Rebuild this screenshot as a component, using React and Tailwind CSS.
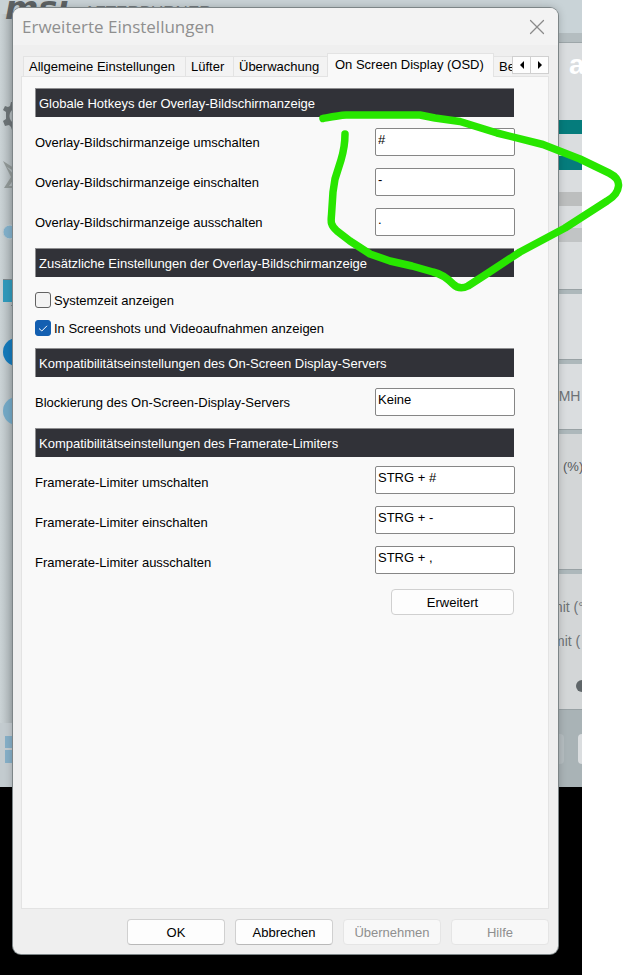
import { X } from 'lucide-react'

const overlayHotkeys = [
  { id: 'osd-toggle', label: 'Overlay-Bildschirmanzeige umschalten', value: '#' },
  { id: 'osd-on', label: 'Overlay-Bildschirmanzeige einschalten', value: '-' },
  { id: 'osd-off', label: 'Overlay-Bildschirmanzeige ausschalten', value: '.' },
]

const limiterHotkeys = [
  { id: 'limit-toggle', label: 'Framerate-Limiter umschalten', value: 'STRG + #' },
  { id: 'limit-on', label: 'Framerate-Limiter einschalten', value: 'STRG + -' },
  { id: 'limit-off', label: 'Framerate-Limiter ausschalten', value: 'STRG + ,' },
]

function SectionTitle({ children }) {
  return (
    <h2 className="h-[29px] border-t border-l border-[#8e8e90] bg-[#313238] pl-[3px] leading-[30px] text-white">
      {children}
    </h2>
  )
}

function Field({ id, label, value, low }) {
  return (
    <div className="flex h-10 items-center justify-between">
      <label htmlFor={id} className={low ? 'pt-1.5' : 'pt-0.5'}>
        {label}
      </label>
      <input
        id={id}
        defaultValue={value}
        className="-mr-px h-7 w-[140px] rounded-xs border border-[#868686] bg-white px-0.5 pb-1.5 outline-none"
      />
    </div>
  )
}

function Check({ id, label, checked }) {
  return (
    <div className="flex h-7 items-center gap-[3px]">
      <span className="relative h-4 w-4">
        <input
          id={id}
          type="checkbox"
          defaultChecked={checked}
          className="peer block h-4 w-4 appearance-none rounded-[3px] border border-[#626262] bg-[#f3f3f3] checked:border-[#135fb1] checked:bg-[#135fb1]"
        />
        <svg
          viewBox="0 0 16 16"
          className="pointer-events-none absolute inset-0 hidden h-4 w-4 peer-checked:block"
          fill="none"
          stroke="#fff"
        >
          <path d="M4 8.5 6.8 11 12 5.8" />
        </svg>
      </span>
      <label htmlFor={id} className="pt-0.5">
        {label}
      </label>
    </div>
  )
}

function Tab({ children, width, active, last }) {
  if (active) {
    return (
      <button
        role="tab"
        aria-selected="true"
        className={`z-10 -mb-px h-6 shrink-0 border border-b-0 border-[#e3e3e3] bg-[#f9f9f9] px-[7px] pb-0.5 text-left whitespace-nowrap ${width}`}
      >
        {children}
      </button>
    )
  }
  return (
    <button
      role="tab"
      aria-selected="false"
      className={`h-5 shrink-0 border-t border-[#e3e3e3] bg-[#f3f3f3] pl-[5px] text-left whitespace-nowrap ${width} ${last ? '' : 'border-l'}`}
    >
      {children}
    </button>
  )
}

function DialogButton({ children, disabled }) {
  return (
    <button
      disabled={disabled}
      className="h-[26px] w-[98px] rounded border border-[#d0d0d0] border-b-[#b9b9b9] bg-[#fdfdfd] pt-0.5 disabled:border-[#e5e5e5] disabled:bg-[#f8f8f8] disabled:text-[#8f8f8f]"
    >
      {children}
    </button>
  )
}

// Slice of the main window that sticks out to the right of the dialog
function MainWindowEdge() {
  return (
    <div className="flex w-10 flex-col overflow-hidden bg-[#dadddf] text-sm whitespace-nowrap text-[#6d7275]">
      <div className="h-[33px] bg-[#c9d3d7]" />
      <div className="h-2.5 border-b border-[#9da6a9] bg-[#b4bdc0]" />
      <div className="h-[77px] pt-1 pl-[27px] text-[28px] leading-9 font-bold text-white">a</div>
      <div className="h-3.5 bg-[#057c7c]" />
      <div className="h-[22px]" />
      <div className="h-3.5 bg-[#057c7c]" />
      <div className="h-[22px]" />
      <div className="h-3.5 bg-[#bcbebe]" />
      <div className="h-[22px]" />
      <div className="h-3.5 bg-[#c1c4c5]" />
      <div className="h-[47px]" />
      <div className="h-[5px] border-t border-[#98a1a4] bg-[#adb8bb]" />
      <div className="h-[65px]" />
      <div className="h-[5px] border-t border-[#98a1a4] bg-[#adb8bb]" />
      <div className="h-[65px] pl-3 leading-[65px]">(MH</div>
      <div className="h-[5px] border-t border-[#98a1a4] bg-[#adb8bb]" />
      <div className="h-[135px] bg-[#d3d6d7] pl-[21px] text-[13px] leading-[65px] text-[#55595b]">(%)</div>
      <div className="h-[5px] border-t border-[#98a1a4] bg-[#adb8bb]" />
      <div className="h-[135px] bg-[#d3d6d7] pt-4 leading-[34px]">
        <div className="pl-[9px]">mit (°</div>
        <div className="pl-[11px]">mit (</div>
        <div className="mt-[22px] ml-[34px] h-3 w-4 rounded-full bg-[#5f6669]" />
      </div>
      <div className="flex h-[78px] items-center gap-[14px] border-t border-[#98a1a4] bg-[#a9b3b6]">
        <div className="h-[30px] w-[22px] shrink-0 rounded bg-[#b5bdc0]" />
        <div className="h-[30px] w-6 shrink-0 rounded bg-[#dadddf]" />
      </div>
    </div>
  )
}

// Logo and icons that peek out to the left and above the dialog
function MainWindowIcons() {
  return (
    <svg width="260" height="787" viewBox="0 0 260 787" aria-hidden="true">
      <defs>
        <linearGradient id="edge" x1="0" x2="1">
          <stop offset="0" stopColor="#cbd3d6" />
          <stop offset="1" stopColor="#a7afb2" />
        </linearGradient>
      </defs>
      <rect y="14" width="14" height="773" fill="url(#edge)" />
      <text x="5" y="19" fontFamily="DejaVu Sans" fontSize="32" fontWeight="bold" fontStyle="italic" fill="#5d6264">
        msi
      </text>
      <text x="84" y="18" fontFamily="Liberation Sans" fontSize="17" fill="#757c80">
        AFTERBURNER
      </text>
      <path d="M14 102h-3l-1 4-2 1-3-1-2 4 3 2v7l-3 2 2 5 4-1 2 2 1 3h2v-7c-6-2-6-12 0-14z" fill="#6b7275" />
      <path d="M3 161 14 168v3l-7-4 7 8v4l-5 7h5v2H4l7-11z" fill="#8f9695" />
      <circle cx="10" cy="232" r="7" fill="#80aec8" stroke="#bdc7cb" />
      <rect x="3" y="279" width="12" height="23" fill="#3098b9" />
      <path d="M3 279.500h11M11 305.500h3" stroke="#7c8589" />
      <circle cx="17" cy="352" r="14" fill="#1478b8" />
      <circle cx="17" cy="411" r="14" fill="#72a7c4" />
      <rect y="723" width="14" height="64" fill="#c3cbcf" />
      <path d="M5 736h9v12H5zM5 750h9v13H5z" fill="#86afc7" />
    </svg>
  )
}

export default function App() {
  return (
    <div className="relative flex min-h-screen flex-col bg-white pt-2 pr-[65px] pb-[21px] pl-[13px] font-['Liberation_Sans',Arial,sans-serif] text-[13px] text-black">
      <div className="absolute inset-y-0 right-[41px] left-0 flex flex-col overflow-hidden bg-black">
        <div className="flex h-[787px] shrink-0 justify-between bg-[#c9d2d6]">
          <MainWindowIcons />
          <MainWindowEdge />
        </div>
      </div>

      <main className="relative flex flex-1 flex-col rounded-lg bg-[#efefef] shadow-[0_0_0_1px_#7d8587,0_0_8px_rgba(0,0,0,0.25)]">
        <header className="flex h-[37px] items-center justify-between rounded-t-lg bg-[#f3f3f3] pr-2 pl-[9px]">
          <h1 className="font-['Open_Sans',sans-serif] text-[17px] text-[#8f8f8f]">Erweiterte Einstellungen</h1>
          <button aria-label="Schließen" className="text-[#8a8a8a]">
            <X size={26} strokeWidth={1.1} />
          </button>
        </header>

        <div className="flex flex-1 flex-col pt-2 pr-[9px] pl-2">
          <div className="flex pl-0.5">
            <div role="tablist" className="flex min-w-0 flex-1 items-end overflow-x-clip">
              <Tab width="w-[162px]">Allgemeine Einstellungen</Tab>
              <Tab width="w-12">Lüfter</Tab>
              <Tab width="w-[94px]">Überwachung</Tab>
              <Tab width="w-[167px]" active>
                On Screen Display (OSD)
              </Tab>
              <Tab width="w-20" last>
                Be
              </Tab>
            </div>
            <div className="mt-[3px] mb-0.5 flex h-[18px] shrink-0">
              <button
                aria-label="Zurück"
                className="flex w-[19px] items-center justify-center border border-[#d0d0d0] bg-[#fdfdfd]"
              >
                <svg width="4" height="8" viewBox="0 0 4 8">
                  <path d="M4 0v8L0 4z" />
                </svg>
              </button>
              <button
                aria-label="Weiter"
                className="-ml-px flex w-[19px] items-center justify-center border border-[#d0d0d0] bg-[#fdfdfd]"
              >
                <svg width="4" height="8" viewBox="0 0 4 8">
                  <path d="M0 0v8l4-4z" />
                </svg>
              </button>
            </div>
          </div>

          <section className="flex-1 border border-[#e3e3e3] bg-[#f9f9f9] pt-[11px] pr-[34px] pl-[13px]">
            <SectionTitle>Globale Hotkeys der Overlay-Bildschirmanzeige</SectionTitle>
            <div className="pt-[5px] pb-1.5">
              {overlayHotkeys.map((row) => (
                <Field key={row.id} {...row} />
              ))}
            </div>

            <SectionTitle>Zusätzliche Einstellungen der Overlay-Bildschirmanzeige</SectionTitle>
            <div className="pt-[9px] pb-1.5">
              <Check id="system-time" label="Systemzeit anzeigen" />
              <Check id="in-captures" label="In Screenshots und Videoaufnahmen anzeigen" checked />
            </div>

            <SectionTitle>Kompatibilitätseinstellungen des On-Screen Display-Servers</SectionTitle>
            <div className="pt-[5px] pb-1.5">
              <Field id="osd-block" label="Blockierung des On-Screen-Display-Servers" value="Keine" />
            </div>

            <SectionTitle>Kompatibilitätseinstellungen des Framerate-Limiters</SectionTitle>
            <div className="pt-[3px]">
              {limiterHotkeys.map((row) => (
                <Field key={row.id} low {...row} />
              ))}
            </div>

            <div className="flex justify-end pt-[9px]">
              <button className="h-[26px] w-[123px] rounded border border-[#d0d0d0] bg-[#fdfdfd] pt-0.5">
                Erweitert
              </button>
            </div>
          </section>
        </div>

        <footer className="flex justify-end gap-2.5 pt-2.5 pr-[9px] pb-[9px]">
          <DialogButton>OK</DialogButton>
          <DialogButton>Abbrechen</DialogButton>
          <DialogButton disabled>Übernehmen</DialogButton>
          <DialogButton disabled>Hilfe</DialogButton>
        </footer>
      </main>

      {/* freehand marker around the overlay hotkeys */}
      <svg
        width="623"
        height="300"
        viewBox="0 0 623 300"
        aria-hidden="true"
        className="pointer-events-none absolute top-0 left-0"
        fill="none"
        stroke="#28e600"
        strokeWidth="7.500"
        strokeLinecap="round"
        strokeLinejoin="round"
      >
        <path d="M323 118.500C331 117 338 115.500 346 115H420L435 118 460 121.500 497 133 543 144.500 580 159 609 173C617 177 619 181 618.500 186 618 192 614 197 607 201L565 228 520 252 485 275 468 286C462 289 457 288 453 284 448 279 442 274 433 272L412 266 390 261 370 254 350 241 337 231C330 225 331 221 331.500 215L333 192 335 179 341 160C344 150 345 143 345 134" />
      </svg>
    </div>
  )
}
